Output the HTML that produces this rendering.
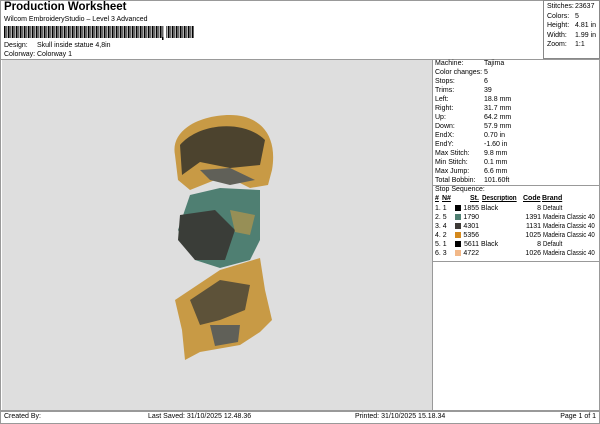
<!DOCTYPE html><html><head><style>
body{margin:0;width:600px;height:424px;background:#fff;font-family:"Liberation Sans",sans-serif;font-size:7px;color:#000;position:relative;overflow:hidden}
.a{position:absolute;white-space:nowrap}
.box{position:absolute;border:1px solid #888;box-sizing:border-box}
.r{position:absolute;text-align:right}
i{position:absolute;width:6px;height:6px}
</style></head><body>
<div class="box" style="left:0;top:0;width:600px;height:424px;border-color:#999"></div>
<div class="a" style="left:4px;top:1px;font-size:11.5px;font-weight:bold">Production Worksheet</div>
<div class="a" style="left:4px;top:16px">Wilcom EmbroideryStudio – Level 3 Advanced</div>
<svg class="a" style="left:4px;top:26px" width="190" height="14">
<defs><pattern id="bc" width="4" height="12" patternUnits="userSpaceOnUse"><rect x="0" width="1.6" height="12" fill="#000"/><rect x="2.4" width="0.9" height="12" fill="#000"/></pattern></defs>
<rect x="0" y="0" width="160" height="12" fill="url(#bc)"/><rect x="162" y="0" width="28" height="12" fill="url(#bc)"/><rect x="158" y="11" width="1.5" height="3"/></svg>
<div class="a" style="left:4px;top:42px">Design:</div><div class="a" style="left:37px;top:42px">Skull inside statue 4,8in</div>
<div class="a" style="left:4px;top:51px">Colorway:</div><div class="a" style="left:37px;top:51px">Colorway 1</div>
<div class="box" style="left:543px;top:0;width:57px;height:59px"></div>
<div class="a" style="left:547px;top:2px;line-height:9.6px">Stitches:<br>Colors:<br>Height:<br>Width:<br>Zoom:</div>
<div class="a" style="left:575px;top:2px;line-height:9.6px">23637<br>5<br>4.81 in<br>1.99 in<br>1:1</div>
<div class="box" style="left:0;top:59px;width:600px;height:352px;border-color:#999"></div>
<div class="a" style="left:2px;top:60px;width:430px;height:350px;background:#dedede"></div>
<div class="box" style="left:432px;top:59px;width:168px;height:352px;border-color:#999"></div>
<div class="a" style="left:435px;top:59px;line-height:9px">Machine:<br>Color changes:<br>Stops:<br>Trims:<br>Left:<br>Right:<br>Up:<br>Down:<br>EndX:<br>EndY:<br>Max Stitch:<br>Min Stitch:<br>Max Jump:<br>Total Bobbin:</div>
<div class="a" style="left:484px;top:59px;line-height:9px">Tajima<br>5<br>6<br>39<br>18.8 mm<br>31.7 mm<br>64.2 mm<br>57.9 mm<br>0.70 in<br>-1.60 in<br>9.8 mm<br>0.1 mm<br>6.6 mm<br>101.60ft</div>
<div class="a" style="left:433px;top:185px;width:166px;border-top:1px solid #999"></div>
<div class="a" style="left:435px;top:186px">Stop Sequence:</div>
<div class="a" style="left:435px;top:195px;font-weight:bold;text-decoration:underline">#</div>
<div class="a" style="left:442px;top:195px;font-weight:bold;text-decoration:underline">N#</div>
<div class="a" style="left:470px;top:195px;font-weight:bold;text-decoration:underline">St.</div>
<div class="a" style="left:482px;top:195px;font-weight:bold;text-decoration:underline;transform:scaleX(.9);transform-origin:left">Description</div>
<div class="a" style="left:523px;top:195px;font-weight:bold;text-decoration:underline">Code</div>
<div class="a" style="left:542px;top:195px;font-weight:bold;text-decoration:underline">Brand</div>
<div class="a" style="left:435px;top:204px;line-height:9.1px">1. 1<br>2. 5<br>3. 4<br>4. 2<br>5. 1<br>6. 3</div>
<i style="left:455px;top:205px;background:#000"></i>
<i style="left:455px;top:214px;background:#4f7f72"></i>
<i style="left:455px;top:223px;background:#3e3a36"></i>
<i style="left:455px;top:232px;background:#d4891c"></i>
<i style="left:455px;top:241px;background:#000"></i>
<i style="left:455px;top:250px;background:#f2b888"></i>
<div class="r" style="left:455px;width:24px;top:204px;line-height:9.1px">1855<br>1790<br>4301<br>5356<br>5611<br>4722</div>
<div class="a" style="left:481px;top:204px;line-height:9.1px">Black<br><br><br><br>Black</div>
<div class="r" style="left:515px;width:26px;top:204px;line-height:9.1px">8<br>1391<br>1131<br>1025<br>8<br>1026</div>
<div class="a" style="left:543px;top:204px;line-height:9.1px;transform:scaleX(.87);transform-origin:left">Default<br>Madeira Classic 40<br>Madeira Classic 40<br>Madeira Classic 40<br>Default<br>Madeira Classic 40</div>
<div class="a" style="left:433px;top:261px;width:166px;border-top:1px solid #999"></div>
<svg class="a" style="left:160px;top:110px" width="120" height="260">
<path d="M15 45 C10 20 40 5 70 5 C100 5 118 25 112 60 L108 75 L90 78 L70 68 L55 70 L30 80 L18 70 Z" fill="#c89a45"/>
<path d="M20 35 C40 12 85 10 105 30 L100 55 L70 58 L40 52 L22 65 Z" fill="#2d2d28" opacity=".8"/>
<path d="M40 60 L70 58 L95 70 L70 75 L50 70 Z" fill="#606058"/>
<path d="M30 85 L60 78 L100 80 L100 130 L90 150 L60 158 L35 150 L18 120 Z" fill="#4f7f72"/>
<path d="M20 105 L55 100 L75 120 L65 150 L35 150 L18 130 Z" fill="#3a3d38"/>
<path d="M70 100 L95 105 L90 125 L75 122 Z" fill="#c89a45" opacity=".6"/>
<path d="M15 190 L60 160 L100 148 L105 180 L112 210 L100 222 L80 235 L40 242 L25 250 L22 220 Z" fill="#c89a45"/>
<path d="M30 190 L60 170 L90 175 L85 200 L60 210 L40 215 Z" fill="#3a3a35" opacity=".75"/>
<path d="M50 215 L80 215 L78 232 L55 236 Z" fill="#606058"/>
</svg>
<div class="a" style="left:0;top:411px;width:600px;border-top:1px solid #999"></div>
<div class="a" style="left:4px;top:413px">Created By:</div>
<div class="a" style="left:148px;top:413px">Last Saved: 31/10/2025 12.48.36</div>
<div class="a" style="left:355px;top:413px">Printed: 31/10/2025 15.18.34</div>
<div class="a" style="right:4px;top:413px">Page 1 of 1</div>
</body></html>
